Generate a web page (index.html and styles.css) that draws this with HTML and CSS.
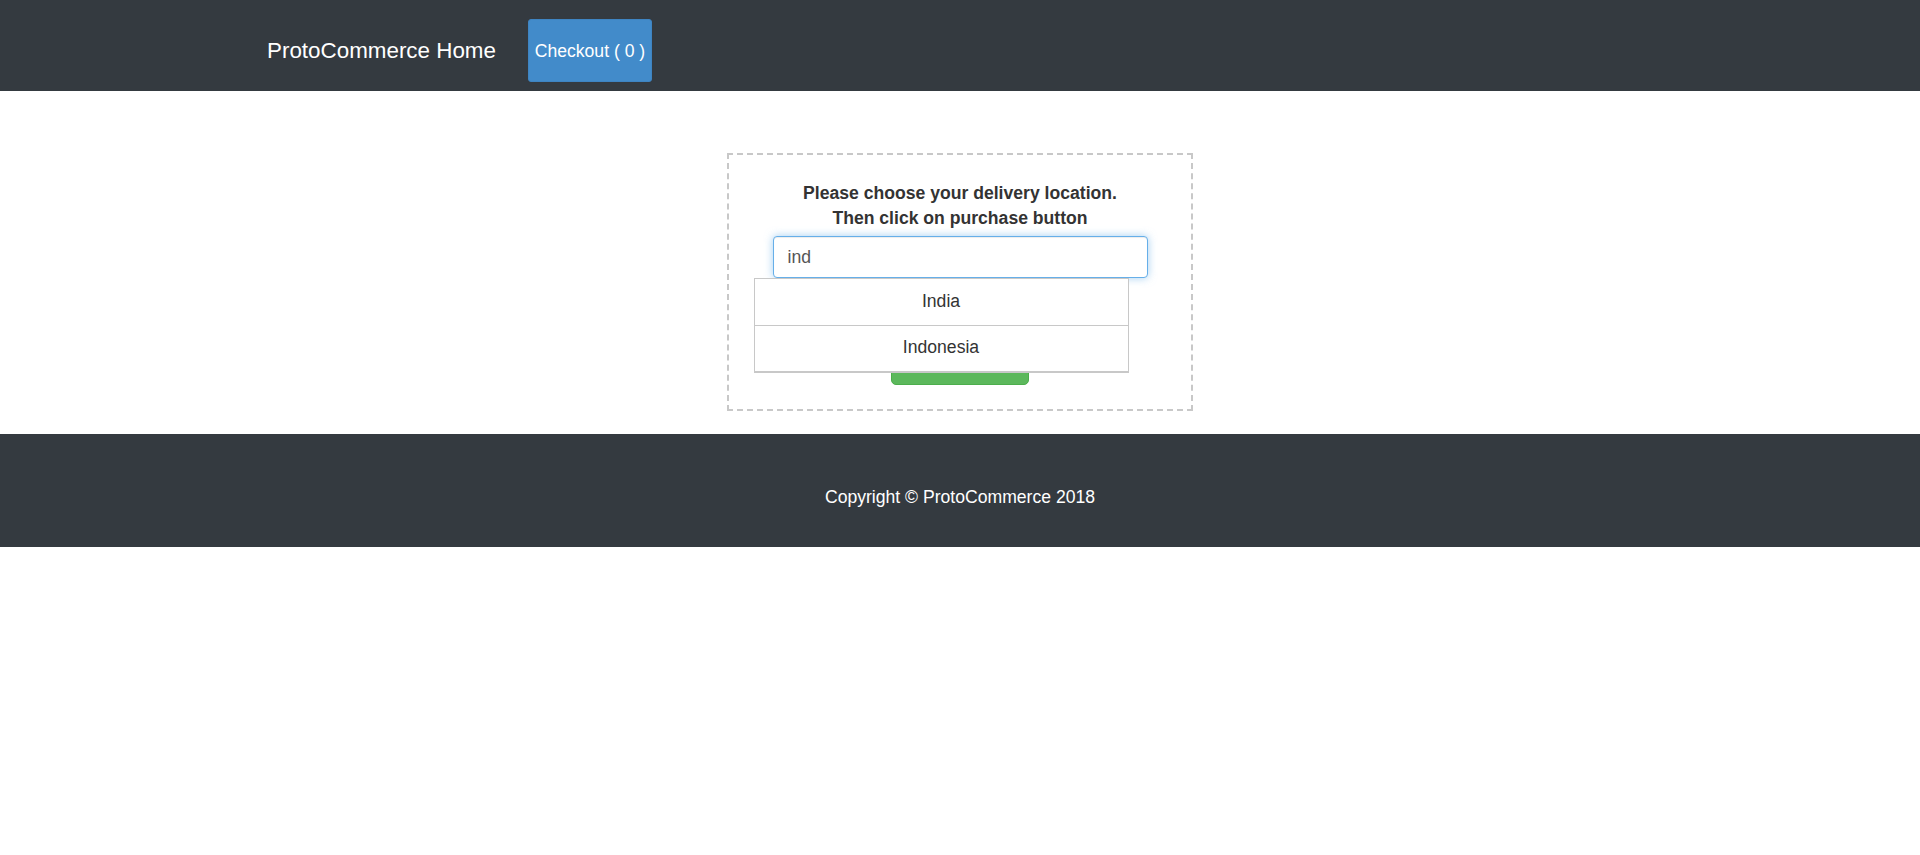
FILE: index.html
```html
<!DOCTYPE html>
<html lang="en">
<head>
<meta charset="utf-8">
<title>ProtoCommerce</title>
<link rel="stylesheet" href="styles.css">
</head>
<body>
<nav class="navbar">
  <a class="brand" href="#">ProtoCommerce Home</a>
  <a class="checkout" href="#">Checkout ( 0 )</a>
</nav>
<main class="main">
  <div class="card">
    <p class="heading">Please choose your delivery location.<br>Then click on purchase button</p>
    <div class="field">
      <input class="country" type="text" value="ind">
      <ul class="suggestions">
        <li class="suggestion">India</li>
        <li class="suggestion">Indonesia</li>
      </ul>
    </div>
    <button class="purchase" type="button">Purchase</button>
  </div>
</main>
<footer class="footer">
  <p class="copy">Copyright © ProtoCommerce 2018</p>
</footer>
</body>
</html>
```

FILE: styles.css
```css
* { box-sizing: border-box; }
body {
  margin: 0;
  font-family: "Liberation Sans", Arial, sans-serif;
  font-size: 17.6px;
  color: #212529;
  background: #fff;
}
.navbar {
  height: 91px;
  background: #343a40;
  display: flex;
  align-items: center;
  padding: 10px 0 0 267px;
  gap: 32px;
}
.brand {
  color: #fff;
  text-decoration: none;
  font-size: 22.4px;
}
.checkout {
  display: flex;
  align-items: center;
  justify-content: center;
  width: 124px;
  height: 63px;
  padding-top: 2px;
  background: #428bca;
  color: #fff;
  text-decoration: none;
  border: 1px solid #3e84c2;
  border-radius: 3px;
  font-size: 17.6px;
}
.main {
  display: flex;
  justify-content: center;
  padding: 62px 0 23px;
}
.card {
  width: 466px;
  height: 258px;
  border: 2px dashed #c8c8c8;
  padding: 26px 0 0;
  display: flex;
  flex-direction: column;
  align-items: center;
}
.heading {
  margin: 0;
  font-weight: bold;
  text-align: center;
  line-height: 25px;
  color: #333;
}
.field {
  position: relative;
  margin-top: 5px;
  width: 375px;
}
.country {
  display: block;
  width: 375px;
  height: 42px;
  padding: 0 14px;
  font-family: inherit;
  font-size: 17.6px;
  color: #555;
  border: 1px solid #66afe9;
  border-radius: 4px;
  outline: none;
  box-shadow: inset 0 1px 1px rgba(0,0,0,.075), 0 0 8px rgba(102,175,233,.6);
}
.suggestions {
  position: absolute;
  left: -19px;
  top: 42px;
  width: 375px;
  margin: 0;
  padding: 0;
  list-style: none;
  background: #fff;
  border: 1px solid #c8c8c8;
  border-bottom-width: 2px;
  z-index: 2;
}
.suggestion {
  height: 46px;
  display: flex;
  align-items: center;
  justify-content: center;
  color: #333;
  padding-bottom: 2px;
}
.suggestion + .suggestion {
  border-top: 1px solid #c8c8c8;
}
.purchase {
  margin-top: 65px;
  width: 138px;
  height: 42px;
  background: #5cb85c;
  border: 1px solid #4cae4c;
  border-radius: 5px;
  color: #fff;
  font-family: inherit;
  font-size: 17.6px;
}
.footer {
  height: 113px;
  background: #343a40;
  display: flex;
  align-items: center;
  justify-content: center;
}
.copy {
  margin: 14px 0 0;
  color: #fff;
  font-size: 17.6px;
}
```
